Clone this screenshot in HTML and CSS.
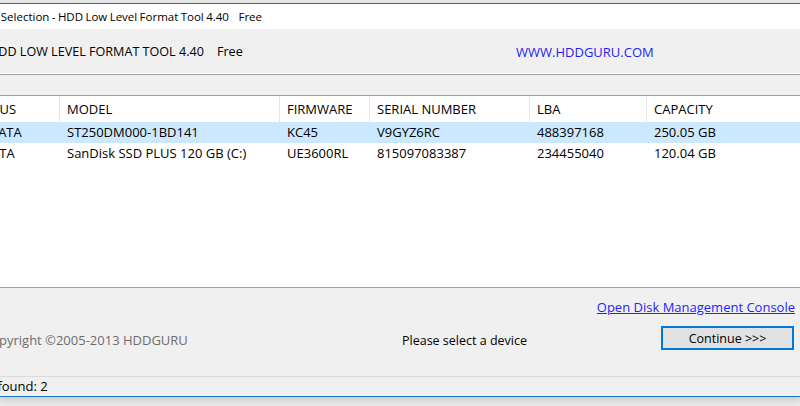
FILE: index.html
```html
<!doctype html>
<html>
<head>
    <title>Device Selection - HDD Low Level Format Tool 4.40</title>
    <meta charset="utf-8" />
    <link rel="stylesheet" href="styles.css">
</head>
<body>
<div id="window">
	<div class="titlebar"><span class="cut title-text">Device Selection - HDD Low Level Format Tool 4.40&nbsp;&nbsp;&nbsp;&nbsp;Free</span></div>
	<div class="banner">
		<span class="cut banner-name">HDD LOW LEVEL FORMAT TOOL 4.40&nbsp;&nbsp;&nbsp;&nbsp;Free</span>
		<span class="banner-url">WWW.HDDGURU.COM</span>
	</div>
	<div class="toolbar"></div>
	<div class="list">
		<div class="row head">
			<div class="cell"><span class="cut bus">BUS</span></div>
			<div class="cell">MODEL</div>
			<div class="cell">FIRMWARE</div>
			<div class="cell">SERIAL NUMBER</div>
			<div class="cell">LBA</div>
			<div class="cell">CAPACITY</div>
		</div>
		<div class="row selected">
			<div class="cell"><span class="cut bus">SATA</span></div>
			<div class="cell">ST250DM000-1BD141</div>
			<div class="cell">KC45</div>
			<div class="cell">V9GYZ6RC</div>
			<div class="cell">488397168</div>
			<div class="cell">250.05 GB</div>
		</div>
		<div class="row">
			<div class="cell"><span class="cut bus">ATA</span></div>
			<div class="cell">SanDisk SSD PLUS 120 GB (C:)</div>
			<div class="cell">UE3600RL</div>
			<div class="cell">815097083387</div>
			<div class="cell">234455040</div>
			<div class="cell">120.04 GB</div>
		</div>
	</div>
	<div class="bottom">
		<div class="copyright"><span class="cut copy-text">Copyright &copy;2005-2013 HDDGURU</span></div>
		<div class="message">Please select a device</div>
		<div class="actions">
			<a class="disk-link" href="#">Open Disk Management Console</a>
			<button class="continue">Continue &gt;&gt;&gt;</button>
		</div>
	</div>
	<div class="statusbar"><span class="cut status-text">Drives found: 2</span></div>
</div>
</body>
</html>
```

FILE: styles.css
```css
html {
	background: #e8e8e8;
}
body {
	margin: 0;
	font-family: 'Open Sans', 'Noto Sans', sans-serif;
	font-size: 13px;
	color: #000;
	overflow: hidden;
	height: 406px;
}
#window {
	margin-top: 3px;
	border-top: 1px solid #1e74c4;
	border-bottom: 1px solid #1e74c4;
	background: #f0f0f0;
	box-shadow: 0 3px 6px rgba(0,0,0,0.12);
}
.cut {
	display: inline-block;
	white-space: nowrap;
}

.titlebar {
	background: #fff;
	height: 25px;
	line-height: 25px;
	font-size: 11.5px;
}
.title-text {
	margin-left: -37px;
	word-spacing: -0.6px;
}

.banner {
	height: 45px;
	display: flex;
	align-items: center;
	border-bottom: 1px solid #a0a0a0;
	box-shadow: inset 0 -1px 0 #fff;
}
.banner-name {
	font-size: 12.6px;
	margin-left: -11px;
	width: 527px;
}
.banner-url {
	color: #1f1ff2;
	font-size: 13px;
}

.toolbar {
	height: 20px;
	border-bottom: 1px solid #a0a0a0;
}

.list {
	background: #fff;
	height: 191px;
	border-bottom: 1px solid #a0a0a0;
}
.row {
	display: grid;
	grid-template-columns: 59px 220px 90px 160px 117px 1fr;
	height: 21px;
	line-height: 21px;
}
.row .cell {
	padding-left: 8px;
	white-space: nowrap;
	overflow: hidden;
}
.row .cell:first-child {
	padding-left: 0;
}
.row.head {
	height: 26px;
	line-height: 26px;
}
.row.head .cell + .cell {
	border-left: 1px solid #e5e5e5;
	padding-left: 7px;
}
.row.selected {
	background: #cce8ff;
}
.bus {
	margin-left: -9px;
}

.bottom {
	height: 89px;
	display: grid;
	grid-template-columns: 402px 1fr auto;
	align-items: end;
	padding-bottom: 26px;
	box-sizing: border-box;
	border-bottom: 1px solid #dadada;
}
.copyright {
	color: #6d6d6d;
	margin-bottom: 1px;
}
.copy-text {
	margin-left: -17px;
}
.message {
	font-size: 12.5px;
	margin-bottom: 1px;
}
.actions {
	display: flex;
	flex-direction: column;
	align-items: flex-end;
	gap: 11px;
	padding-right: 5px;
}
.disk-link {
	color: #2424ff;
	line-height: 16px;
}
.continue {
	width: 133px;
	height: 24px;
	margin-right: 1px;
	border: 2px solid #0078d7;
	background: #e1e1e1;
	font-family: inherit;
	font-size: 12.5px;
	padding: 0;
}

.statusbar {
	height: 19px;
	line-height: 19px;
}
.status-text {
	margin-left: -44px;
}
```
